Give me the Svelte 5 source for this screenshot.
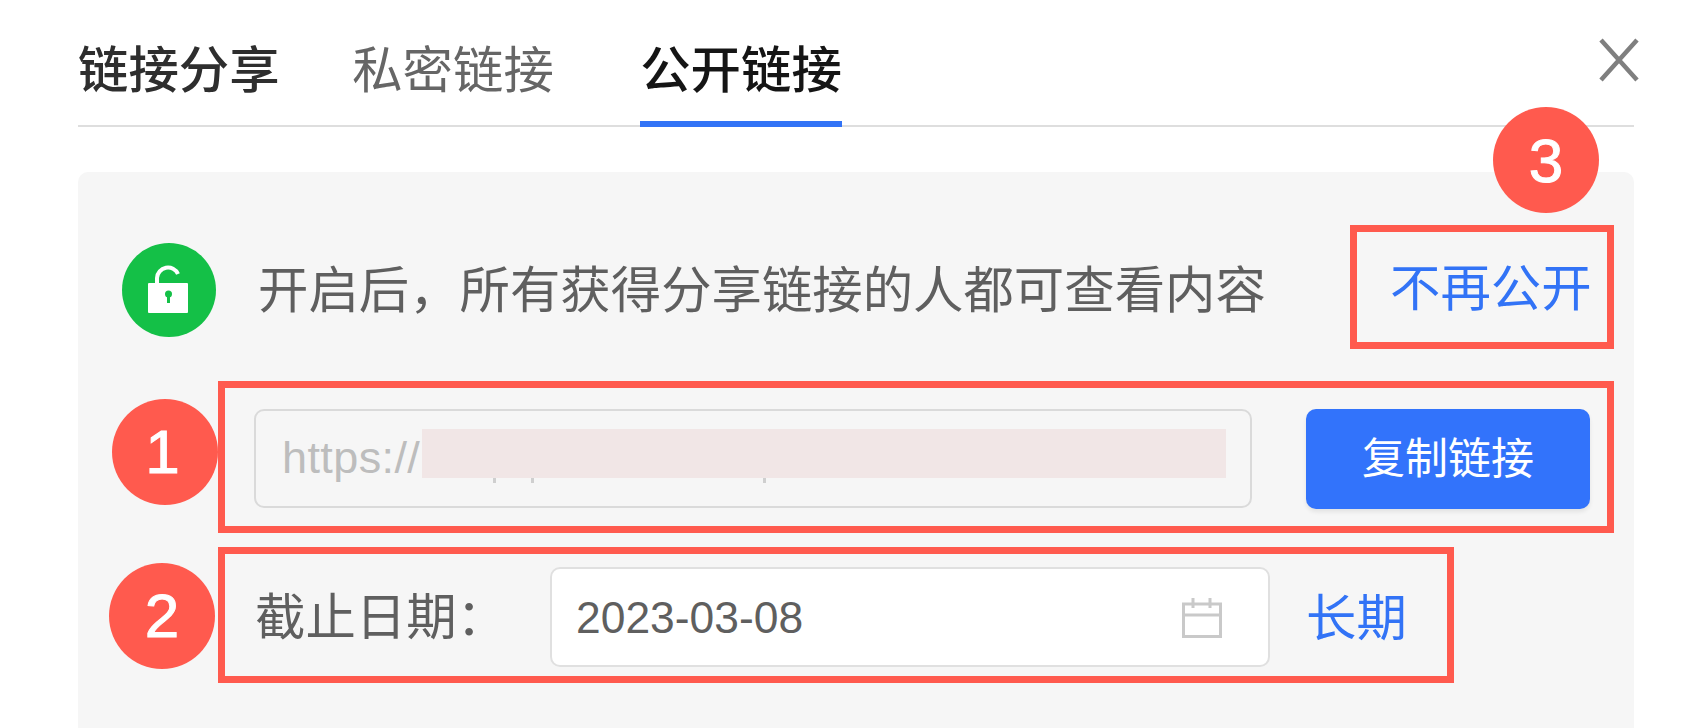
<script>
  const tabs = ["私密链接", "公开链接"];
  let active = $state(1);
  let date = "2023-03-08";
</script>

<div class="dialog">
  <header class="tabs">
    <span class="title">链接分享</span>
    {#each tabs as tab, i}
      <button class="tab" class:active={active === i} onclick={() => (active = i)}>{tab}</button>
    {/each}
    <svg class="close" width="40" height="44" viewBox="0 0 40 44" aria-label="关闭">
      <path d="M2 2 L38 42 M38 2 L2 42" fill="none" stroke="#7f7f7f" stroke-width="4.5" />
    </svg>
  </header>

  <section class="panel">
    <div class="status">
      <span class="lock">
        <svg width="94" height="94" viewBox="0 0 94 94">
          <circle cx="47" cy="47" r="47" fill="#14c047" />
          <path d="M35 41 V35 A11 11 0 0 1 56 31" fill="none" stroke="#fff" stroke-width="4" />
          <rect x="26" y="40" width="40" height="30" rx="1" fill="#fff" />
          <circle cx="46.5" cy="51" r="3.5" fill="#14c047" />
          <rect x="45" y="52" width="3" height="8" fill="#14c047" />
        </svg>
      </span>
      <p class="hint">开启后，所有获得分享链接的人都可查看内容</p>
      <div class="mark stop">
        <span class="badge badge-3">3</span>
        <button class="link">不再公开</button>
      </div>
    </div>

    <div class="mark url-row">
      <span class="badge badge-1">1</span>
      <div class="url-field">
        <span class="url">https://</span>
        <span class="redacted">
          <i style="left: 71px"></i>
          <i style="left: 109px"></i>
          <i style="left: 341px"></i>
        </span>
      </div>
      <button class="copy">复制链接</button>
    </div>

    <div class="mark date-row">
      <span class="badge badge-2">2</span>
      <span class="label">截止日期：</span>
      <div class="date-field">
        <span>{date}</span>
        <svg width="40" height="40" viewBox="0 0 40 40">
          <path d="M1.5 6 H38.5 V38.5 H1.5 Z M1.5 17 H38.5 M11 0 V10 M28 0 V10" fill="none" stroke="#c9c9c9" stroke-width="3" />
        </svg>
      </div>
      <button class="link long">长期</button>
    </div>
  </section>
</div>

<style>
  :global(body) {
    background: #fff;
  }

  .dialog {
    height: 728px;
    box-sizing: border-box;
    padding: 0 62px 0 78px;
    display: flex;
    flex-direction: column;
    overflow: hidden;
    font-family: "Liberation Sans", "Noto Sans CJK SC", sans-serif;
    font-size: 50.4px;
    line-height: 50px;
    color: #5f5f5f;
  }

  button {
    font: inherit;
    border: none;
    background: none;
    padding: 0;
    cursor: pointer;
  }

  /* tabs */
  .tabs {
    position: relative;
    display: flex;
    height: 127px;
    box-sizing: border-box;
    padding-top: 46px;
    border-bottom: 2px solid #dedede;
  }

  .title {
    width: 202px;
    margin-right: 72px;
    font-weight: 500;
    color: #2e2e2e;
  }

  .tab {
    width: 202px;
    height: 81px;
    margin-right: 86px;
    text-align: center;
    align-self: flex-start;
    color: #666;
    line-height: 50px;
    padding-bottom: 31px;
    box-sizing: border-box;
  }

  .tab.active {
    color: #151515;
    font-weight: 500;
    border-bottom: 6px solid #3273f6;
  }

  .close {
    position: absolute;
    right: -5px;
    top: 38px;
  }

  /* panel */
  .panel {
    flex: 1;
    margin-top: 45px;
    padding: 53px 20px 0 0;
    background: #f6f6f6;
    border-radius: 10px 10px 0 0;
  }

  .status {
    display: flex;
    align-items: center;
    height: 124px;
  }

  .lock {
    display: flex;
    margin-left: 44px;
    margin-top: 6px;
  }

  .hint {
    margin: 8px 0 0 42px;
    flex: 1;
  }

  /* red annotations */
  .mark {
    position: relative;
    box-sizing: border-box;
    border: 7px solid #ff5a4e;
  }

  .badge {
    position: absolute;
    width: 106px;
    height: 106px;
    border-radius: 50%;
    background: #ff5a4e;
    color: #fff;
    font-size: 62px;
    line-height: 106px;
    text-align: center;
    -webkit-text-stroke: 1px #fff;
  }

  .badge-1 {
    left: -113px;
    top: 11px;
    text-indent: -5px;
  }

  .badge-2 {
    left: -116px;
    top: 9px;
  }

  .badge-3 {
    right: 8px;
    top: -125px;
    line-height: 108px;
  }

  .stop {
    width: 264px;
    height: 124px;
    padding: 4px 0 0 33px;
    display: flex;
    align-items: center;
  }

  .link {
    color: #3273f6;
    white-space: nowrap;
  }

  .url-row {
    margin: 32px 0 0 140px;
    height: 152px;
    padding: 21px 17px 18px 29px;
    display: flex;
    gap: 54px;
  }

  .url-field {
    width: 998px;
    height: 99px;
    box-sizing: border-box;
    border: 2px solid #dadada;
    border-radius: 10px;
    padding-left: 26px;
    display: flex;
    align-items: center;
  }

  .url {
    font-size: 45px;
    letter-spacing: 0.4px;
    color: #bdbdbd;
    margin-top: -2px;
  }

  .redacted {
    position: relative;
    width: 804px;
    height: 49px;
    margin: -10px 0 0 2px;
    background: #f1e6e6;
  }

  .redacted i {
    position: absolute;
    top: 49px;
    width: 3px;
    height: 5px;
    background: #cfcfcf;
  }

  .copy {
    width: 284px;
    height: 100px;
    border-radius: 10px;
    background: #3273fb;
    color: #fff;
    font-size: 43px;
    box-shadow: 0 3px 4px rgba(0, 0, 0, 0.08);
  }

  .date-row {
    margin: 14px 0 0 140px;
    width: 1236px;
    height: 136px;
    padding: 13px 0 9px 30px;
    display: flex;
    align-items: center;
  }

  .label {
    width: 295px;
    margin-top: 1px;
  }

  .date-field {
    width: 720px;
    height: 100px;
    box-sizing: border-box;
    margin-right: 36px;
    border: 2px solid #e0e0e0;
    border-radius: 10px;
    background: #fff;
    padding: 2px 46px 0 24px;
    display: flex;
    align-items: center;
    justify-content: space-between;
    font-size: 44.4px;
  }

  .long {
    margin-top: 4px;
  }
</style>
